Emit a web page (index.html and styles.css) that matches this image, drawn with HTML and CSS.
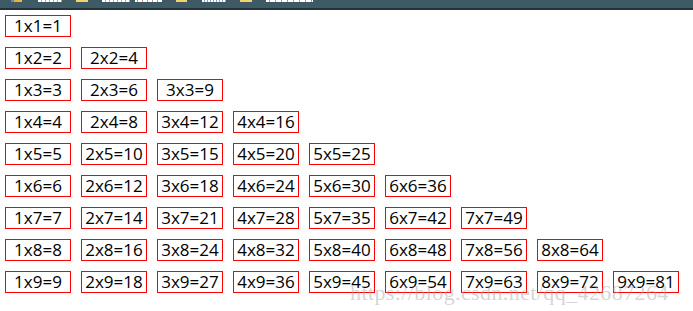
FILE: index.html
```html
<!DOCTYPE html>
<html>
<head>
<meta charset="utf-8">
<link rel="stylesheet" href="styles.css">
</head>
<body>
<div class="topbar">
  <span class="bm ic"></span>
  <span class="bm t1"></span>
  <span class="bm f1"></span>
  <span class="bm t2"></span>
  <span class="bm t3"></span>
  <span class="bm f2"></span>
  <span class="bm t4"></span>
  <span class="bm f3"></span>
  <span class="bm t5"></span>
</div>
<div class="table">
  <div class="row"><span class="cell">1x1=1</span></div>
  <div class="row"><span class="cell">1x2=2</span><span class="cell">2x2=4</span></div>
  <div class="row"><span class="cell">1x3=3</span><span class="cell">2x3=6</span><span class="cell">3x3=9</span></div>
  <div class="row"><span class="cell">1x4=4</span><span class="cell">2x4=8</span><span class="cell">3x4=12</span><span class="cell">4x4=16</span></div>
  <div class="row"><span class="cell">1x5=5</span><span class="cell">2x5=10</span><span class="cell">3x5=15</span><span class="cell">4x5=20</span><span class="cell">5x5=25</span></div>
  <div class="row"><span class="cell">1x6=6</span><span class="cell">2x6=12</span><span class="cell">3x6=18</span><span class="cell">4x6=24</span><span class="cell">5x6=30</span><span class="cell">6x6=36</span></div>
  <div class="row"><span class="cell">1x7=7</span><span class="cell">2x7=14</span><span class="cell">3x7=21</span><span class="cell">4x7=28</span><span class="cell">5x7=35</span><span class="cell">6x7=42</span><span class="cell">7x7=49</span></div>
  <div class="row"><span class="cell">1x8=8</span><span class="cell">2x8=16</span><span class="cell">3x8=24</span><span class="cell">4x8=32</span><span class="cell">5x8=40</span><span class="cell">6x8=48</span><span class="cell">7x8=56</span><span class="cell">8x8=64</span></div>
  <div class="row"><span class="cell">1x9=9</span><span class="cell">2x9=18</span><span class="cell">3x9=27</span><span class="cell">4x9=36</span><span class="cell">5x9=45</span><span class="cell">6x9=54</span><span class="cell">7x9=63</span><span class="cell">8x9=72</span><span class="cell">9x9=81</span></div>
</div>
<div class="watermark">https://blog.csdn.net/qq_42687264</div>
</body>
</html>
```
FILE: styles.css
```css
html, body {
  margin: 0;
  padding: 0;
  background: #ffffff;
  width: 693px;
  height: 311px;
  overflow: hidden;
  position: relative;
}
.topbar {
  height: 8px;
  background: #3e5a65;
  border-bottom: 2px solid #22323a;
  position: relative;
}
.bm {
  position: absolute;
  top: 0;
  height: 2px;
}
.ic { left: 11px; width: 11px; background: linear-gradient(90deg, #2f9be0 0 3px, #f4a72a 3px 7px, #e9b93a 7px); }
.t1 { left: 38px; width: 24px; background: repeating-linear-gradient(90deg, #ffffff 0 3px, #9fb2ba 3px 4px); }
.f1 { left: 76px; width: 12px; background: #f5d36a; }
.t2 { left: 102px; width: 28px; background: repeating-linear-gradient(90deg, #ffffff 0 3px, #9fb2ba 3px 4px); }
.t3 { left: 135px; width: 27px; background: repeating-linear-gradient(90deg, #ffffff 0 2px, #c98a8a 2px 3px, #ffffff 3px 5px); }
.f2 { left: 176px; width: 11px; background: #f5d36a; }
.t4 { left: 202px; width: 24px; background: repeating-linear-gradient(90deg, #ffffff 0 2px, #8aa0c8 2px 3px); }
.f3 { left: 240px; width: 12px; background: #f5d36a; }
.t5 { left: 266px; width: 47px; background: repeating-linear-gradient(90deg, #ffffff 0 3px, #c98a8a 3px 4px, #ffffff 4px 6px); }

.table {
  display: flex;
  flex-direction: column;
  gap: 10px;
  padding: 5px 0 0 5px;
}
.row {
  display: flex;
  gap: 10px;
}
.cell {
  box-sizing: border-box;
  width: 66px;
  height: 22px;
  border: 1px solid #ff0000;
  font-family: "Open Sans", "Noto Sans", sans-serif;
  font-size: 17px;
  line-height: 20px;
  color: #000000;
  text-align: center;
  white-space: nowrap;
}
.watermark {
  position: absolute;
  left: 350px;
  top: 280px;
  font-family: "Liberation Serif", serif;
  font-size: 22px;
  letter-spacing: 0.4px;
  color: rgba(160, 160, 160, 0.45);
  white-space: nowrap;
  pointer-events: none;
}
```
